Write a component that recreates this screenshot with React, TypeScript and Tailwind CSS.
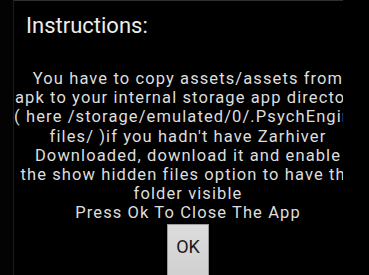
export default function App() {
  const lines = [
    "You have to copy assets/assets from",
    "apk to your internal storage app directory",
    "( here /storage/emulated/0/.PsychEngine",
    "files/ )if you hadn't have Zarhiver",
    "Downloaded, download it and enable",
    "the show hidden files option to have the",
    "folder visible",
    "Press Ok To Close The App",
  ];
  return (
    <div className="w-[369px] h-[275px] bg-black overflow-hidden flex" style={{ fontFamily: "Roboto, 'Liberation Sans', sans-serif" }}>
      <div className="w-[13px] shrink-0 bg-[#030303]" />
      <div className="w-[330px] shrink-0 h-full border-l border-t border-l-[#1c1c1c] border-t-[#2e2e2e] overflow-hidden flex flex-col">
        <div className="pl-[12px] pt-[12px] text-[22px] leading-[26px] text-[#ececec]">Instructions:</div>
        <div className="w-[352px] -ml-[2px] mt-[30px] flex flex-col items-center text-[16.5px] tracking-[1.1px] leading-[19.2px] text-[#dedede]">
          {lines.map((l, i) => (
            <div key={i} className="whitespace-nowrap">{l}</div>
          ))}
          <div className="mt-[1px] w-[42px] h-[60px] bg-gradient-to-b from-[#dcdcdc] to-[#cfcfcf] border border-[#9c9c9c] flex items-start justify-center pt-[12px] text-[18px] leading-[20px] tracking-normal text-[#1a1a1a]">
            OK
          </div>
        </div>
      </div>
    </div>
  );
}
